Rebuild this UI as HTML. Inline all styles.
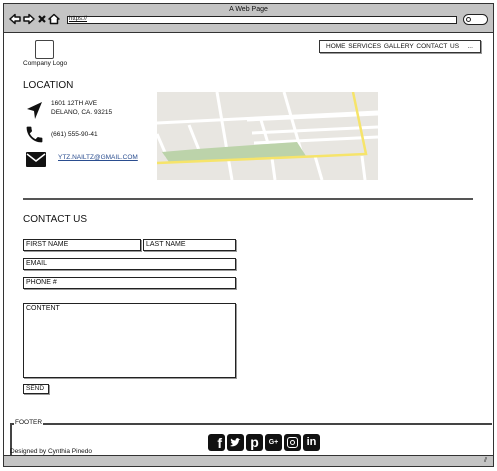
<!DOCTYPE html>
<html><head><meta charset="utf-8">
<style>
*{margin:0;padding:0;box-sizing:border-box}
body{width:497px;height:471px;background:#fff;position:relative;overflow:hidden;font-family:"Liberation Sans",sans-serif;color:#111}
.a{position:absolute}
.t{font-size:6.5px;white-space:nowrap}
.f{position:absolute;border:1.5px solid #222;font-size:7px;padding:1px 2px;line-height:7px;box-shadow:1px 1px 0 #999}
</style></head><body>
<div class="a" style="left:3px;top:3px;width:491px;height:464px;border:1.5px solid #333"></div>
<div class="a" style="left:4px;top:4px;width:489px;height:29px;background:#c4c4c4;border-bottom:1.5px solid #333"></div>
<div class="a t" style="left:0;width:497px;text-align:center;top:6px;font-size:7px">A Web Page</div>
<svg class="a" style="left:9px;top:13px" width="56" height="12" viewBox="0 0 56 12">
<path d="M1 6 L6 1.5 L6 4 L11 4 L11 8 L6 8 L6 10.5 Z" fill="#fff" stroke="#111" stroke-width="1.5" stroke-linejoin="round"/>
<path d="M25 6 L20 1.5 L20 4 L15 4 L15 8 L20 8 L20 10.5 Z" fill="#fff" stroke="#111" stroke-width="1.5" stroke-linejoin="round"/>
<path d="M30 3 L36 9 M36 3 L30 9" stroke="#111" stroke-width="2.2"/>
<path d="M40 6 L45 1.5 L50 6 L48.5 6 L48.5 10.5 L41.5 10.5 L41.5 6 Z" fill="#fff" stroke="#111" stroke-width="1.5" stroke-linejoin="round"/>
</svg>
<div class="a" style="left:67px;top:16px;width:390px;height:8px;background:#fff;border:1px solid #222"></div>
<div class="a t" style="left:69px;top:16px;font-size:6px;text-decoration:underline">https://</div>
<div class="a" style="left:463px;top:14px;width:25px;height:11px;background:#fff;border:1.5px solid #222;border-radius:6px"></div>
<div class="a" style="left:466px;top:17px;width:5px;height:5px;border:1px solid #222;border-radius:50%"></div>
<div class="a" style="left:35px;top:40px;width:19px;height:19px;border:1.5px solid #444;border-radius:2px"></div>
<div class="a t" style="left:23px;top:60px">Company Logo</div>
<div class="a" style="left:319px;top:40px;width:162px;height:13px;border:1.5px solid #333;box-shadow:1px 1px 0 #999"></div>
<div class="a t" style="left:326px;top:43px;font-size:6.5px;word-spacing:1px">HOME SERVICES GALLERY CONTACT US &nbsp;&nbsp;...</div>
<div class="a" style="left:23px;top:80px;font-size:10px">LOCATION</div>
<svg class="a" style="left:27px;top:102px" width="16" height="17" viewBox="0 0 16 17"><path d="M15 0 L0 7 L7 9 L8 17 Z" fill="#111"/></svg>
<div class="a t" style="left:51px;top:100px;line-height:8.5px;font-size:6.5px">1601 12TH AVE<br>DELANO, CA. 93215</div>
<svg class="a" style="left:24px;top:124px" width="21" height="21" viewBox="0 0 24 24"><path d="M6.6 10.8c1.4 2.8 3.8 5.1 6.6 6.6l2.2-2.2c.3-.3.7-.4 1-.2 1.1.4 2.3.6 3.6.6.6 0 1 .4 1 1V20c0 .6-.4 1-1 1C10.6 21 3 13.4 3 4c0-.6.4-1 1-1h3.5c.6 0 1 .4 1 1 0 1.3.2 2.5.6 3.6.1.3 0 .7-.2 1z" fill="#111"/></svg>
<div class="a t" style="left:51px;top:131px">(661) 555-90-41</div>
<svg class="a" style="left:26px;top:152px" width="20" height="15" viewBox="0 0 20 15"><rect width="20" height="15" rx="1" fill="#111"/><path d="M1 2 L10 9 L19 2" stroke="#fff" stroke-width="1.5" fill="none"/></svg>
<div class="a t" style="left:58px;top:154px;color:#2a4d8f;text-decoration:underline">YTZ.NAILTZ@GMAIL.COM</div>
<svg class="a" style="left:157px;top:92px" width="221" height="88" viewBox="0 0 221 88">
<rect width="221" height="88" fill="#e8e6e1"/>
<g stroke="#fff" stroke-width="3" fill="none">
<path d="M0 31 L221 20"/><path d="M90 28 L221 22"/><path d="M95 41 L221 35"/><path d="M97 51 L221 45"/>
<path d="M60 0 L75 88"/><path d="M127 0 L145 62"/><path d="M32 33 L42 58"/><path d="M104 28 L113 58"/>
<path d="M158 64 L165 88"/><path d="M205 64 L208 88"/><path d="M115 66 L118 88"/><path d="M0 42 L10 65"/>
</g>
<path d="M5 60 L40 57 L110 52 L140 50 L149 64 L12 70 Z" fill="#bcd3aa"/>
<path d="M0 71 L165 64 L209 62 L196 0" stroke="#f6e46a" stroke-width="2.5" fill="none"/>
</svg>
<div class="a" style="left:23px;top:198px;width:450px;height:1.5px;background:#555"></div>
<div class="a" style="left:23px;top:214px;font-size:10px">CONTACT US</div>
<div class="f" style="left:23px;top:239px;width:118px;height:12px">FIRST NAME</div>
<div class="f" style="left:143px;top:239px;width:93px;height:12px">LAST NAME</div>
<div class="f" style="left:23px;top:258px;width:213px;height:12px">EMAIL</div>
<div class="f" style="left:23px;top:277px;width:213px;height:12px">PHONE #</div>
<div class="f" style="left:23px;top:303px;width:213px;height:75px">CONTENT</div>
<div class="f" style="left:23px;top:384px;width:26px;height:10px;font-size:6.5px;line-height:6px">SEND</div>
<div class="a" style="left:10px;top:423px;width:482px;height:1.5px;background:#444"></div>
<div class="a" style="left:10px;top:423px;width:1.5px;height:32px;background:#444"></div>
<div class="a t" style="left:14px;top:419px;background:#fff;padding:0 1px">FOOTER</div>
<div class="a t" style="left:10px;top:448px">Designed by Cynthia Pinedo</div>
<div class="a" style="left:208px;top:434px;display:flex;gap:2px">
<div style="width:17px;height:17px;background:#111;border-radius:3px;color:#fff;font:bold 14px/19px 'Liberation Sans';text-align:right;padding-right:3px">f</div>
<svg width="17" height="17" viewBox="0 0 17 17"><rect width="17" height="17" rx="3" fill="#111"/><path d="M3 12 C6 13 10 12 11.5 8 L12 6 L13.5 5 L12 5 C11 3.5 8.5 4 8.5 6.5 C6.5 6.5 5 5.5 4 4.5 C3.5 6 4 7.5 5 8 L4 8 C4.5 9.5 5.5 10 6 10 C5 11 4 11.5 3 12 Z" fill="#fff"/></svg>
<div style="width:17px;height:17px;background:#111;border-radius:3px;color:#fff;font:bold 14px/16px 'Liberation Sans';text-align:center">p</div>
<div style="width:17px;height:17px;background:#111;border-radius:3px;color:#fff;font:bold 7px/17px 'Liberation Sans';text-align:center">G+</div>
<div style="width:17px;height:17px;background:#111;border-radius:3px;position:relative"><div style="position:absolute;left:3px;top:3px;width:11px;height:11px;border:1.5px solid #fff;border-radius:3px"></div><div style="position:absolute;left:6px;top:6px;width:5px;height:5px;border:1.5px solid #fff;border-radius:50%"></div></div>
<div style="width:17px;height:17px;background:#111;border-radius:3px;color:#fff;font:bold 11px/17px 'Liberation Sans';text-align:center">in</div>
</div>
<div class="a" style="left:4px;top:455px;width:489px;height:11px;background:#c4c4c4;border-top:1.5px solid #333"></div>
<div class="a" style="left:484px;top:457px;font-size:7px">⫽</div>
</body></html>
